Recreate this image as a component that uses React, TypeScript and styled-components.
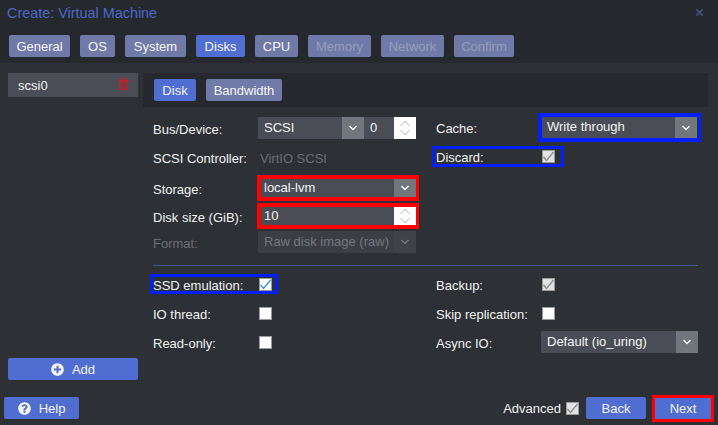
import React from "react";
import styled, { createGlobalStyle } from "styled-components";
import { FaPlusCircle, FaQuestionCircle, FaTimes } from "react-icons/fa";

const Global = createGlobalStyle`
  html, body { margin: 0; padding: 0; background: #2d3035; }
  body { font-family: "Liberation Sans", Arial, sans-serif; font-size: 13px; color: #f2f2f2; }
  * { box-sizing: border-box; }
`;

const Win = styled.div`
  width: 718px; height: 425px; display: flex; flex-direction: column; overflow: hidden; background: #2d3035;
`;
const Header = styled.header`
  height: 63px; flex: none; background: #25282d; padding: 0 9px; display: flex; flex-direction: column;
`;
const TitleRow = styled.div`
  height: 35px; display: flex; justify-content: space-between; align-items: flex-start; padding: 5px 4px 0 0; margin-left: -2px;
`;
const Title = styled.h1`
  margin: 0; font-size: 14.4px; font-weight: 400; line-height: 16px; color: #4a69c9;
`;
const Close = styled.span`
  color: #414c78; font-size: 11px; display: flex; margin-top: 2px;
`;
const TabRow = styled.div`display: flex; gap: 10px;`;
const Btn = styled.div<{ $active?: boolean; $off?: boolean; $w: number }>`
  height: 22px; width: ${p => p.$w}px; border-radius: 2px; display: flex; align-items: center; justify-content: center; gap: 8px;
  font-size: 13px;
  background: ${p => (p.$active ? "#506dd1" : "#6f7aa8")};
  color: ${p => (p.$off ? "#959cbb" : "#f5f5f5")};
`;
const Body = styled.main`flex: 1; display: flex; min-height: 0; padding: 10px 10px 0 8px;`;
const Side = styled.aside`width: 130px; flex: none; display: flex; flex-direction: column; margin-right: 5px; height: 307px; justify-content: space-between;`;
const ListItem = styled.div`
  height: 24px; background: #4a4d55; display: flex; align-items: center; justify-content: space-between; padding: 0 9px 0 10px; font-size: 13px;
`;
const Trash = styled.span`display: flex; margin-top: -3px;`;
const AddBtn = styled(Btn)`width: 100%; background: #506dd1;`;
const Panel = styled.section`flex: 1; display: flex; flex-direction: column; min-width: 0;`;
const PanelTabs = styled.div`height: 34px; background: #25282d; padding: 6px 11px; display: flex; gap: 10px;`;
const Form = styled.div`padding: 6px 0 0 10px; width: 556px;`;
const Cols = styled.div`display: grid; grid-template-columns: 283px 1fr; height: 152px;`;
const LeftCol = styled.div`display: flex; flex-direction: column; padding-top: 4px;`;
const RightCol = styled.div`display: flex; flex-direction: column;`;
const Row = styled.div<{ $top?: number; $h?: number }>`
  display: flex; align-items: center; height: ${p => p.$h ?? 22}px; margin-top: ${p => p.$top ?? 0}px;
`;
const Label = styled.span<{ $w?: number; $off?: boolean }>`
  width: ${p => p.$w ?? 105}px; flex: none; font-size: 13px; white-space: nowrap; position: relative; top: 1px;
  color: ${p => (p.$off ? "#6d7077" : "#f2f2f2")};
`;
const Box = styled.div<{ $w: number; $h?: number; $off?: boolean }>`
  width: ${p => p.$w}px; height: ${p => p.$h ?? 22}px; flex: none; display: flex; align-items: stretch;
  background: ${p => (p.$off ? "#3b3e44" : "#4a4d55")};
  color: ${p => (p.$off ? "#74777e" : "#f5f5f5")};
`;
const BoxText = styled.span<{ $pl?: number }>`
  flex: 1; padding: 0 0 2px ${p => p.$pl ?? 6}px; display: flex; align-items: center; font-size: 13px; white-space: nowrap; overflow: hidden;
`;
const Trigger = styled.span<{ $off?: boolean }>`
  width: 22px; flex: none; display: flex; align-items: center; justify-content: center; background: ${p => (p.$off ? "#3f4248" : "#71757c")};
`;
const Spin = styled.span`width: 22px; flex: none; background: #fff; display: flex; align-items: center; justify-content: center;`;
const Static = styled.span`color: #6a6d74; font-size: 13px; padding-left: 2px; position: relative; top: 1px;`;
const Outline = styled.div<{ $c: string; $w: number; $h: number; $pl?: number; $pr?: number; $ml?: number }>`
  border: 3px solid ${p => p.$c}; width: ${p => p.$w}px; height: ${p => p.$h}px; display: flex; align-items: center; flex: none;
  padding: 0 ${p => p.$pr ?? 0}px 0 ${p => p.$pl ?? 0}px; margin-left: ${p => p.$ml ?? 0}px;
`;
const FieldOutline = styled(Outline)`margin-left: -1px; padding: 0; border-width: 4px 3px 4px 4px;`;
const Divider = styled.hr`border: 0; height: 1px; background: #46538a; margin: 0 0 8px 0; width: 545px;`;
const Lower = styled.div`display: grid; grid-template-columns: 283px 1fr;`;
const LowerCol = styled.div`display: flex; flex-direction: column; gap: 9px;`;
const LRow = styled(Row)`height: 20px;`;
const CheckBox = styled.span<{ $grey?: boolean }>`
  width: 13px; height: 13px; flex: none; display: flex; background: ${p => (p.$grey ? "#e2e2e2" : "#fff")}; border: 1px solid #9a9a9a;
`;
const Footer = styled.footer`height: 28px; margin-bottom: 3px; padding: 0 4px; display: flex; align-items: center; justify-content: space-between; flex: none;`;
const FootRight = styled.div`display: flex; align-items: center;`;
const Adv = styled.span`font-size: 13px; margin-right: 5px;`;
const NextFrame = styled.div`
  width: 62px; height: 27px; border: 3px solid #f00; margin-left: 6px; background: #506dd1; display: flex; align-items: center; justify-content: center; font-size: 13px;
`;
const BlueBtn = styled(Btn)`background: #506dd1;`;
const BackBtn = styled(BlueBtn)`margin-left: 7px;`;
const IconWrap = styled.span`display: flex; font-size: 13px;`;

const Chev = ({ color = "#fff" }: { color?: string }) => (
  <svg width="10" height="6" viewBox="0 0 10 6"><path d="M1.5 1l3.5 3.5L8.5 1" fill="none" stroke={color} strokeWidth="1.4" /></svg>
);
const Spinner = () => (
  <svg width="12" height="18" viewBox="0 0 12 18">
    <path d="M1.5 7l4.5-5 4.5 5M1.5 11l4.5 5 4.5-5" fill="none" stroke="#b8b8b8" strokeWidth="1" />
  </svg>
);
const Check = ({ color }: { color: string }) => (
  <svg width="11" height="11" viewBox="0 0 11 11"><path d="M0.5 6l3 3.5L10.5 1" fill="none" stroke={color} strokeWidth="1.2" /></svg>
);
const TrashIcon = () => (
  <svg width="11" height="13" viewBox="0 0 11 13">
    <path d="M0 2.5h11v1.5H0zM3.2 2.5V1.2C3.2.6 3.7.3 4.2.3h2.6c.5 0 1 .3 1 .9v1.3H6.8V1.3H4.2v1.2z" fill="#b3262c" />
    <path d="M1.2 4h8.6v8c0 .6-.4 1-1 1H2.2c-.6 0-1-.4-1-1z" fill="#b3262c" />
    <rect x="2.7" y="5" width="5.6" height="6.6" fill="#7c3a40" />
  </svg>
);

export default function App() {
  return (
    <Win>
      <Global />
      <Header>
        <TitleRow>
          <Title>Create: Virtual Machine</Title>
          <Close><FaTimes /></Close>
        </TitleRow>
        <TabRow>
          <Btn $w={61}>General</Btn>
          <Btn $w={35}>OS</Btn>
          <Btn $w={61}>System</Btn>
          <Btn $w={49} $active>Disks</Btn>
          <Btn $w={43}>CPU</Btn>
          <Btn $w={63} $off>Memory</Btn>
          <Btn $w={63} $off>Network</Btn>
          <Btn $w={60} $off>Confirm</Btn>
        </TabRow>
      </Header>
      <Body>
        <Side>
          <ListItem>scsi0<Trash><TrashIcon /></Trash></ListItem>
          <AddBtn $w={130} $active><IconWrap><FaPlusCircle /></IconWrap>Add</AddBtn>
        </Side>
        <Panel>
          <PanelTabs>
            <Btn $w={42} $active>Disk</Btn>
            <Btn $w={76}>Bandwidth</Btn>
          </PanelTabs>
          <Form>
            <Cols>
              <LeftCol>
                <Row>
                  <Label>Bus/Device:</Label>
                  <Box $w={158}>
                    <BoxText>SCSI</BoxText>
                    <Trigger><Chev /></Trigger>
                    <Box $w={30}><BoxText>0</BoxText></Box>
                    <Spin><Spinner /></Spin>
                  </Box>
                </Row>
                <Row $top={7}>
                  <Label>SCSI Controller:</Label>
                  <Static>VirtIO SCSI</Static>
                </Row>
                <Row $top={7} $h={26}>
                  <Label>Storage:</Label>
                  <FieldOutline $c="#f00" $w={162} $h={26}>
                    <Box $w={155} $h={18}><BoxText $pl={3}>local-lvm</BoxText><Trigger><Chev /></Trigger></Box>
                  </FieldOutline>
                </Row>
                <Row $top={2} $h={26}>
                  <Label>Disk size (GiB):</Label>
                  <FieldOutline $c="#f00" $w={162} $h={26}>
                    <Box $w={155} $h={18}><BoxText $pl={3}>10</BoxText><Spin><Spinner /></Spin></Box>
                  </FieldOutline>
                </Row>
                <Row $top={2}>
                  <Label $off>Format:</Label>
                  <Box $w={158} $off><BoxText>Raw disk image (raw)</BoxText><Trigger $off><Chev color="#74777e" /></Trigger></Box>
                </Row>
              </LeftCol>
              <RightCol>
                <Row $h={29}>
                  <Label $w={103}>Cache:</Label>
                  <FieldOutline $c="#0020ff" $w={163} $h={29}>
                    <Box $w={155} $h={21}><BoxText $pl={5}>Write through</BoxText><Trigger><Chev /></Trigger></Box>
                  </FieldOutline>
                </Row>
                <Row $top={4} $h={21}>
                  <Outline $c="#0020ff" $w={132} $h={21} $pl={1} $pr={5} $ml={-4}>
                    <Label $w={106}>Discard:</Label>
                    <CheckBox $grey><Check color="#8a8a8a" /></CheckBox>
                  </Outline>
                </Row>
              </RightCol>
            </Cols>
            <Divider />
            <Lower>
              <LowerCol>
                <LRow>
                  <Outline $c="#0020ff" $w={128} $h={20} $pr={3} $ml={-3}>
                    <Label $w={106}>SSD emulation:</Label>
                    <CheckBox><Check color="#2f8fd8" /></CheckBox>
                  </Outline>
                </LRow>
                <LRow><Label $w={106}>IO thread:</Label><CheckBox /></LRow>
                <LRow><Label $w={106}>Read-only:</Label><CheckBox /></LRow>
              </LowerCol>
              <LowerCol>
                <LRow><Label $w={106}>Backup:</Label><CheckBox $grey><Check color="#8a8a8a" /></CheckBox></LRow>
                <LRow><Label $w={106}>Skip replication:</Label><CheckBox /></LRow>
                <LRow><Label $w={105}>Async IO:</Label><Box $w={157}><BoxText>Default (io_uring)</BoxText><Trigger><Chev /></Trigger></Box></LRow>
              </LowerCol>
            </Lower>
          </Form>
        </Panel>
      </Body>
      <Footer>
        <BlueBtn $w={75}><IconWrap><FaQuestionCircle /></IconWrap>Help</BlueBtn>
        <FootRight>
          <Adv>Advanced</Adv>
          <CheckBox $grey><Check color="#8a8a8a" /></CheckBox>
          <BackBtn $w={60}>Back</BackBtn>
          <NextFrame>Next</NextFrame>
        </FootRight>
      </Footer>
    </Win>
  );
}
